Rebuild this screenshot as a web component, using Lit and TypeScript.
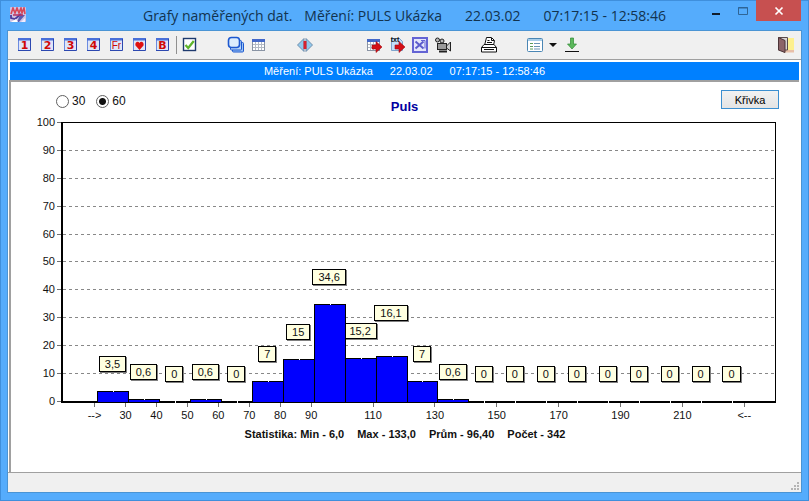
import { LitElement, html, svg, css, nothing } from "lit";
import { customElement, property, state } from "lit/decorators.js";
import { classMap } from "lit/directives/class-map.js";
import { styleMap } from "lit/directives/style-map.js";

interface Bin {
  value: number;
  raised?: boolean;
}

const BINS: Bin[] = [
  { value: 3.5 }, { value: 0.6 }, { value: 0 }, { value: 0.6 }, { value: 0 },
  { value: 7 }, { value: 15 }, { value: 34.6 }, { value: 15.2 },
  { value: 16.1, raised: true }, { value: 7 }, { value: 0.6 },
  ...Array.from({ length: 9 }, () => ({ value: 0 })),
];

const X_LABELS = [
  "-->", "30", "40", "50", "60", "70", "80", "90", "", "110", "", "130",
  "", "150", "", "170", "", "190", "", "210", "", "<--",
];

const Y_LABELS = [100, 90, 80, 70, 60, 50, 40, 30, 20, 10, 0];

const czech = (n: number) => String(n).replace(".", ",");

const pageIcon = (glyph: unknown) => svg`
  <rect x="1" y="1" width="13" height="13" fill="#dfe5f8"/>
  <path d="M1.500 14V1.500" stroke="#6c8ce0"/>
  <rect x="1" y="1" width="13" height="2.500" fill="#4a70d8"/>
  <path d="M13.500 2v11.500H1" fill="none" stroke="#2c48b0"/>
  ${glyph}`;

const numberIcon = (text: string) =>
  pageIcon(svg`<text class="digit" x="7.500" y="12" text-anchor="middle">${text}</text>`);

const gridPart = svg`
  <rect x="1.500" y="2.500" width="12" height="11" fill="#fff" stroke="#8a94a4"/>
  <rect x="1" y="2" width="13" height="3" fill="#4468c8"/>
  <path d="M2 7.500h11M2 10.500h11M4.500 5v8M7.500 5v8M10.500 5v8" stroke="#b4bac4"/>`;

const redArrow = svg`<path d="M6 8h4V4.500l6 5.500-6 5.500V12H6z" fill="#d40f16" stroke="#9d0a10" stroke-width=".6"/>`;

const ICONS: Record<string, unknown> = {
  one: numberIcon("1"),
  two: numberIcon("2"),
  three: numberIcon("3"),
  four: numberIcon("4"),
  freq: pageIcon(svg`<text class="digit thin" x="7.500" y="12" text-anchor="middle">Fr</text>`),
  heart: pageIcon(svg`<path d="M7.500 13L3.500 8.500C2.500 5.500 6 3.500 7.500 6 9 3.500 12.500 5.500 11.500 8.500z" fill="#e01010"/>`),
  bee: numberIcon("B"),
  check: svg`
    <rect x="1.500" y="1.500" width="12" height="12" fill="#fff" stroke="#1e3a6e" stroke-width="1.400"/>
    <path d="M3.500 8l2.700 3L11.800 4" fill="none" stroke="#5fb52c" stroke-width="2.300"/>`,
  stack: svg`
    <rect x="4.500" y="5.500" width="11" height="9.500" rx="1" fill="#9cc4f4" stroke="#1d58d0"/>
    <rect x="2.500" y="3.500" width="11" height="9.500" rx="1" fill="#b8d6f8" stroke="#1d58d0"/>
    <rect x=".5" y=".5" width="11" height="10" rx="3" fill="#dcecfd" stroke="#1d58d0" stroke-width="1.600"/>`,
  table: gridPart,
  split: svg`
    <path d="M7 1.500v13L.5 8z" fill="#8fc8ec" stroke="#6a86a4" stroke-width=".9"/>
    <path d="M9 1.500v13L15.500 8z" fill="#8fc8ec" stroke="#6a86a4" stroke-width=".9"/>
    <rect x="6.500" y="4" width="3" height="8" fill="#d8202c"/>`,
  exportTable: svg`${gridPart}${redArrow}`,
  exportText: svg`
    <path d="M2.500 1.500h8l3 3v9h-11z" fill="#c4dff8" stroke="#7fa4cc"/>
    <text class="tiny" x="6" y="5" text-anchor="middle">txt</text>${redArrow}`,
  excel: svg`
    <rect x="0" y="0" width="16" height="16" fill="#6464d4"/>
    <rect x="2" y="2" width="12" height="12" fill="#e4e6fb"/>
    <path d="M3.500 4.500l8 7M11.500 4.500l-8 7" stroke="#5c5ccc" stroke-width="2"/>
    <path d="M9 3.500h4v8" fill="none" stroke="#6464d4"/>`,
  camera: svg`
    <rect x="2.500" y="6.500" width="9" height="6" fill="#9a9a9a" stroke="#222"/>
    <path d="M11.500 9L15.500 5v9l-4-3z" fill="#ccc" stroke="#222"/>
    <circle cx="2.500" cy="3" r="2" fill="#bbb" stroke="#222"/>
    <circle cx="7" cy="4" r="2" fill="#bbb" stroke="#222"/>
    <path d="M4 14.500h8" stroke="#222" stroke-width="2"/>`,
  printer: svg`
    <path d="M3.500 8.500L5.500.5h5l3 3-1 5" fill="#fff" stroke="#111"/>
    <path d="M6.500 3.500h2M6 5.500h5M10.500 1v2.500H13" stroke="#111" fill="none"/>
    <path d="M.5 10.500l2.500-3h10l2.500 3v4.500H.5z" fill="#fff" stroke="#111"/>
    <path d="M.5 10.500h15M3 12.500h10" stroke="#111"/>`,
  form: svg`
    <rect x=".5" y="1.500" width="15" height="13" rx="1" fill="#fff" stroke="#4a86b4"/>
    <rect x="1" y="2" width="14" height="2" fill="#a8cde8"/>
    <path d="M3 6.500h3M3 9.500h3M3 12h3" stroke="#5b9c58"/>
    <path d="M7 6.500h6M7 9.500h6M7 12h6" stroke="#6a94b4"/>`,
  download: svg`
    <path d="M6.500 1h3v6h3l-4.500 5L3.500 7h3z" fill="#5cb85c" stroke="#2f8a34" stroke-width=".7"/>
    <path d="M1 14.500h14" stroke="#111"/>`,
  door: svg`
    <rect x="7" y="1" width="9" height="12" fill="#fdf08e"/>
    <path d="M7 13h9v2.500H5z" fill="#e8bfa8"/>
    <path d="M.5.5h9v12.500h-9z" fill="#d8d4d4" stroke="#5a4a4a"/>
    <path d="M.5.5L7 3.500v12L.5 13z" fill="#8c6468" stroke="#4c3438"/>`,
};

type Tool = [name: string, label: string, group?: string];

const TOOLS: Tool[] = [
  ["one", "Graf 1"], ["two", "Graf 2"], ["three", "Graf 3"], ["four", "Graf 4"],
  ["freq", "Frekvence"], ["heart", "Puls"], ["bee", "Graf B"],
  ["check", "Vybrat", "ruled"],
  ["stack", "Vrstvy", "apart"], ["table", "Tabulka"],
  ["split", "Rozdělit", "apart"],
  ["exportTable", "Export tabulky", "far"], ["exportText", "Export textu"],
  ["excel", "Excel"], ["camera", "Kamera"],
  ["printer", "Tisk", "apart"],
  ["form", "Formulář", "apart"], ["caret", "Další volby"], ["download", "Uložit"],
  ["door", "Zavřít", "end"],
];

@customElement("tool-bar")
export class ToolBar extends LitElement {
  static styles = css`
    :host {
      display: flex;
      height: 29px;
      padding: 0 4px 0 5px;
      background: #f0f0f0;
      border-bottom: 1px solid #a0a0a0;
      box-sizing: border-box;
    }
    .tool {
      display: grid;
      place-items: center;
      width: 23px;
      padding: 0;
      border: 0;
      background: none;
    }
    .caret { width: 14px; }
    .apart { margin-left: 23px; }
    .far { margin-left: 46px; }
    .end { margin-left: auto; }
    .rule {
      width: 1px;
      height: 18px;
      margin: 5px 1px 0 2px;
      background: #909090;
    }
    .icon { display: block; width: 16px; height: 16px; overflow: visible; }
    .arrow {
      border: 4px solid transparent;
      border-top-color: #111;
      border-bottom: 0;
    }
    .digit { font: bold 11px "DejaVu Sans", sans-serif; fill: #d00808; }
    .thin { font: 10px "Liberation Sans", sans-serif; }
    .tiny { font: bold 7px "Liberation Sans", sans-serif; fill: #111; }
  `;

  render() {
    return TOOLS.map(([name, label, group]) => html`
      ${group === "ruled" ? html`<span class="rule"></span>` : nothing}
      <button
        class=${classMap({
          tool: true,
          caret: name === "caret",
          apart: group === "apart",
          far: group === "far",
          end: group === "end",
        })}
        aria-label=${label}
      >
        ${name === "caret"
          ? html`<span class="arrow"></span>`
          : html`<svg class="icon" viewBox="0 0 16 16">${ICONS[name]}</svg>`}
      </button>`);
  }
}

@customElement("pulse-histogram")
export class PulseHistogram extends LitElement {
  @property({ attribute: false }) bins: Bin[] = [];

  static styles = css`
    :host {
      display: grid;
      grid-template-columns: 50px 1fr;
      grid-template-rows: 1fr 23px;
      font: 11px "Liberation Sans", Arial, sans-serif;
      color: #111;
    }
    .y-axis {
      display: flex;
      flex-direction: column;
      justify-content: space-between;
      padding-bottom: 1px;
    }
    .y-mark {
      display: flex;
      align-items: center;
      justify-content: flex-end;
      gap: 2px;
      height: 1px;
      line-height: 1px;
    }
    .y-tick { width: 4px; height: 1px; background: #707070; }
    .plot {
      display: grid;
      border: 1px solid #000;
      border-left-width: 2px;
      border-bottom-width: 2px;
    }
    .lines, .bars { grid-area: 1 / 1; }
    .lines {
      display: flex;
      flex-direction: column;
      justify-content: space-between;
      margin: -1px 0;
    }
    .line {
      height: 1px;
      background: repeating-linear-gradient(90deg, #888 0 3px, transparent 3px 6px);
    }
    .line:first-child, .line:last-child { visibility: hidden; }
    .bars {
      display: grid;
      grid-template-columns: repeat(23, minmax(0, 1fr));
      margin: -1px -3px -2px 3px;
    }
    .bin {
      display: flex;
      flex-direction: column;
      justify-content: flex-end;
      align-items: center;
    }
    .bin:first-child { grid-column-start: 2; }
    .bar {
      position: relative;
      flex: none;
      align-self: stretch;
      margin-right: -1px;
      box-sizing: border-box;
      border: 1px solid #000;
      background: #00f;
    }
    .bar::before {
      content: "";
      position: absolute;
      top: -1px;
      left: 50%;
      width: 1px;
      height: 1px;
      background: #fff;
    }
    .zero::before { height: 2px; }
    .tag {
      flex: none;
      margin-bottom: 19px;
      padding: 0 5px;
      border: 1px solid #000;
      background: #ffffe1;
      box-shadow: 1px 1px #808080;
      line-height: 14px;
    }
    .raised { margin-bottom: 35px; }
    .x-axis {
      grid-column: 2;
      display: flex;
      justify-content: space-between;
      margin-left: 2px;
      padding: 0 calc(100% / 23);
    }
    .x-mark {
      display: flex;
      flex-direction: column;
      align-items: center;
      width: 1px;
      line-height: 17px;
      white-space: nowrap;
    }
    .x-tick { flex: none; width: 1px; height: 4px; background: #707070; }
  `;

  render() {
    return html`
      <div class="y-axis">
        ${Y_LABELS.map((n) => html`
          <div class="y-mark"><span>${n}</span><i class="y-tick"></i></div>`)}
      </div>
      <div class="plot">
        <div class="lines">${Y_LABELS.map(() => html`<div class="line"></div>`)}</div>
        <div class="bars">
          ${this.bins.map((bin) => html`
            <div class="bin">
              <span class=${classMap({ tag: true, raised: !!bin.raised })}>${czech(bin.value)}</span>
              <div
                class=${classMap({ bar: true, zero: bin.value === 0 })}
                style=${styleMap({ height: `calc(${bin.value}% + 2px)` })}
              ></div>
            </div>`)}
        </div>
      </div>
      <div class="x-axis">
        ${X_LABELS.map((text) => html`
          <div class="x-mark">
            ${text ? html`<i class="x-tick"></i><span>${text}</span>` : nothing}
          </div>`)}
      </div>`;
  }
}

@customElement("app-root")
export class AppRoot extends LitElement {
  @state() private step = "60";

  static styles = css`
    :host {
      display: flex;
      flex-direction: column;
      min-height: 100vh;
      box-sizing: border-box;
      padding: 0 8px 9px;
      background: #55acfc;
      box-shadow: inset 0 0 0 1px #3f8fdc;
      font: 11px "Liberation Sans", Arial, sans-serif;
      color: #111;
    }
    .titlebar {
      display: grid;
      grid-template-columns: 99px 1fr 99px;
      height: 31px;
    }
    .logo { width: 16px; height: 16px; margin: 7px 0 0 2px; }
    .title {
      display: flex;
      justify-content: center;
      margin: 0;
      font: 14px/31px "Open Sans", "Noto Sans", sans-serif;
      color: #12334f;
      white-space: nowrap;
    }
    .title-part + .title-part { margin-left: 23px; }
    .title-part + .near { margin-left: 12px; }
    .controls {
      display: flex;
      justify-content: flex-end;
      height: 21px;
    }
    .control {
      display: grid;
      place-items: center;
      width: 27px;
      padding: 0;
      border: 0;
      background: none;
    }
    .close { width: 45px; background: #c75050; }
    .glyph { display: block; width: 10px; height: 10px; }
    .client {
      flex: 1;
      display: flex;
      flex-direction: column;
      background: #fff;
      box-shadow: 0 0 0 1px #4a94d4;
    }
    .banner {
      display: flex;
      justify-content: center;
      gap: 17px;
      margin: 2px 2px 0;
      background: #0080ff;
      color: #fff;
      line-height: 18px;
    }
    .panel {
      flex: 1;
      display: flex;
      flex-direction: column;
      margin: 0 2px 0 1px;
      padding: 8px 23px 30px 0;
      border-top: 2px solid #a0a0a0;
      border-left: 2px solid #a0a0a0;
    }
    .head {
      display: grid;
      grid-template-columns: 1fr auto 1fr;
      height: 32px;
      align-items: start;
    }
    .choices { display: flex; gap: 11px; padding: 4px 0 0 45px; }
    .choice { display: flex; align-items: center; gap: 3px; font-size: 12px; line-height: 14px; }
    .radio {
      appearance: none;
      width: 13px;
      height: 13px;
      margin: 0;
      border: 1px solid #606060;
      border-radius: 50%;
      background: #fff;
    }
    .radio:checked { background: radial-gradient(circle, #111 0 3px, #fff 4px); }
    .caption {
      margin: 0;
      padding: 9px 0 0 22px;
      font-size: 13px;
      line-height: 16px;
      color: #0000a0;
    }
    .curve {
      justify-self: end;
      width: 58px;
      height: 19px;
      margin-right: -3px;
      padding: 0;
      border: 1px solid #3c8fd0;
      background: linear-gradient(#f2f2f2, #e4e4e4);
      font: 11px "Liberation Sans", Arial, sans-serif;
      color: #000;
    }
    .chart { flex: 1; }
    .stats {
      display: flex;
      justify-content: center;
      gap: 13px;
      margin: 0;
      padding-left: 23px;
      font-weight: bold;
      line-height: 16px;
    }
    .status {
      display: flex;
      justify-content: flex-end;
      align-items: flex-end;
      height: 20px;
      box-sizing: border-box;
      border-top: 1px solid #a0a0a0;
      background: #f0f0f0;
    }
    .grip { width: 12px; height: 12px; }
  `;

  private radio(value: string) {
    return html`
      <label class="choice">
        <input
          class="radio"
          type="radio"
          name="step"
          .value=${value}
          ?checked=${this.step === value}
          @change=${() => (this.step = value)}
        />${value}
      </label>`;
  }

  render() {
    return html`
      <header class="titlebar">
        <svg class="logo" viewBox="0 0 16 16">
          <rect width="16" height="15" rx="1" fill="#d0c4e4"/>
          <path d="M1 7l2-6 2 5 2-5 2 5 2-5 1 5 2-5 1 6" fill="none" stroke="#d84858" stroke-width="1.600"/>
          <path d="M1 8v3l4 1 6-5" fill="none" stroke="#4c3c9c" stroke-width="1.800"/>
          <path d="M10 8h5l-6 7H7z" fill="#5b5bb0"/>
          <path d="M1 15l5-3 2 3z" fill="#fff"/>
          <path d="M3 8h10" stroke="#b83060" stroke-width="1.500"/>
          <path d="M11 15l4-4v4z" fill="#eef"/>
        </svg>
        <h1 class="title">
          <span class="title-part">Grafy naměřených dat.</span>
          <span class="title-part near">Měření: PULS Ukázka</span>
          <span class="title-part">22.03.02</span>
          <span class="title-part">07:17:15 - 12:58:46</span>
        </h1>
        <div class="controls">
          <button class="control" aria-label="Minimalizovat">
            <svg class="glyph" viewBox="0 0 10 10"><path d="M1 8h8" stroke="#111d2c" stroke-width="2"/></svg>
          </button>
          <button class="control" aria-label="Maximalizovat">
            <svg class="glyph" viewBox="0 0 10 10"><path d="M.5 1.500h9v7h-9zM0 2h10" fill="none" stroke="#2f6596"/></svg>
          </button>
          <button class="control close" aria-label="Zavřít">
            <svg class="glyph" viewBox="0 0 10 10"><path d="M1.500 1.500l7 7M8.500 1.500l-7 7" stroke="#fff" stroke-width="1.700"/></svg>
          </button>
        </div>
      </header>
      <main class="client">
        <tool-bar></tool-bar>
        <div class="banner">
          <span>Měření: PULS Ukázka</span><span>22.03.02</span><span>07:17:15 - 12:58:46</span>
        </div>
        <section class="panel">
          <div class="head">
            <div class="choices">${this.radio("30")}${this.radio("60")}</div>
            <h2 class="caption">Puls</h2>
            <button class="curve">Křivka</button>
          </div>
          <pulse-histogram class="chart" .bins=${BINS}></pulse-histogram>
          <p class="stats">
            <span>Statistika: Min - 6,0</span><span>Max - 133,0</span>
            <span>Prům - 96,40</span><span>Počet - 342</span>
          </p>
        </section>
        <footer class="status">
          <svg class="grip" viewBox="0 0 12 12">
            <path d="M8 2h2v2H8zM8 5h2v2H8zM8 8h2v2H8zM5 5h2v2H5zM5 8h2v2H5zM2 8h2v2H2z" fill="#b4b4b4"/>
          </svg>
        </footer>
      </main>`;
  }
}
